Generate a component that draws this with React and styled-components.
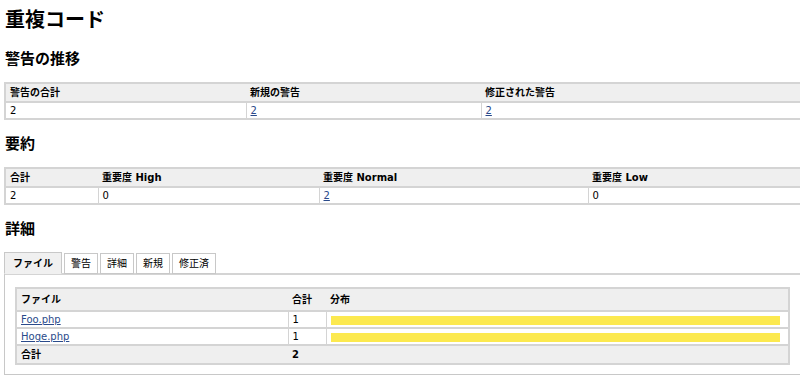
import React from "react";
import styled, { createGlobalStyle } from "styled-components";

const Global = createGlobalStyle`
  html, body { margin: 0; padding: 0; background: #fff; overflow: hidden; }
  body {
    font-family: "DejaVu Sans", Verdana, "Noto Sans CJK JP", sans-serif;
    font-size: 11px;
    color: #000;
  }
`;

const Page = styled.div`
  width: 830px;
  padding: 4px 0 0 4px;
  box-sizing: border-box;
`;

const Title = styled.h1`
  font-size: 20px;
  font-weight: bold;
  margin: 3px 0 0 1px;
  line-height: 26px;
`;

const Heading = styled.h2`
  font-size: 15px;
  font-weight: bold;
  margin: ${(p) => p.$top || 16}px 0 ${(p) => p.$bottom || 13}px 1px;
  line-height: 20px;
`;

const Table = styled.table`
  width: ${(p) => p.$width || "100%"};
  table-layout: fixed;
  border-collapse: collapse;
  border: 2px solid #d4d4d4;
  border-right: ${(p) => (p.$open ? "none" : "2px solid #d4d4d4")};
`;

const Th = styled.th`
  background: #efefef;
  text-align: left;
  font-weight: bold;
  font-size: 10px;
  line-height: 14px;
  padding: ${(p) => (p.$tall ? "4px 4px 3px" : "2px 4px 1px")};
  border-bottom: 2px solid #d4d4d4;
  width: ${(p) => p.$w || "auto"};
  box-sizing: border-box;
`;

const Td = styled.td`
  padding: 1px 4px 0;
  font-size: 10px;
  line-height: 14px;
  border-left: ${(p) => (p.$first || p.$foot ? "none" : "1px solid #d4d4d4")};
  border-bottom: ${(p) => (p.$last ? "none" : "2px solid #d4d4d4")};
  background: ${(p) => (p.$foot ? "#efefef" : "#fff")};
  font-weight: ${(p) => (p.$foot ? "bold" : "normal")};
  ${(p) => p.$foot && "padding: 2px 4px 1px;"}
`;

const Link = styled.a`
  color: #2a4a8a;
  text-decoration: underline;
`;

const Tabs = styled.div`
  display: flex;
  gap: 2px;
  position: relative;
  z-index: 1;
`;

const Tab = styled.div`
  padding: ${(p) => (p.$active ? "4px 8px 3px" : "3px 6px 2px")};
  margin-top: ${(p) => (p.$active ? "0" : "1px")};
  font-size: 10px;
  font-weight: ${(p) => (p.$active ? "bold" : "normal")};
  background: ${(p) => (p.$active ? "#f0f0f0" : "#fff")};
  border: 1px solid #c8c8c8;
  border-bottom: ${(p) => (p.$active ? "1px solid #f0f0f0" : "1px solid #c8c8c8")};
  margin-bottom: -1px;
  line-height: 13px;
`;

const Panel = styled.div`
  border: 1px solid #c8c8c8;
  border-top: 2px solid #d4d4d4;
  padding: 12px 10px 9px 10px;
  width: 830px;
  box-sizing: border-box;
`;

const Bar = styled.div`
  height: 9px;
  margin: 1px 0;
  background: #fce94f;
  width: ${(p) => p.$w}px;
`;

export default function App() {
  return (
    <>
      <Global />
      <Page>
        <Title>重複コード</Title>
        <Heading $top={16}>警告の推移</Heading>
        <Table $open>
          <thead>
            <tr>
              <Th $w="241px">警告の合計</Th>
              <Th $w="235px">新規の警告</Th>
              <Th>修正された警告</Th>
            </tr>
          </thead>
          <tbody>
            <tr>
              <Td $first $last>2</Td>
              <Td $last><Link href="#">2</Link></Td>
              <Td $last><Link href="#">2</Link></Td>
            </tr>
          </tbody>
        </Table>
        <Heading $top={14}>要約</Heading>
        <Table $open>
          <thead>
            <tr>
              <Th $w="93px">合計</Th>
              <Th $w="221px">重要度 High</Th>
              <Th $w="269px">重要度 Normal</Th>
              <Th>重要度 Low</Th>
            </tr>
          </thead>
          <tbody>
            <tr>
              <Td $first $last>2</Td>
              <Td $last>0</Td>
              <Td $last><Link href="#">2</Link></Td>
              <Td $last>0</Td>
            </tr>
          </tbody>
        </Table>
        <Heading $top={14}>詳細</Heading>
        <Tabs>
          <Tab $active>ファイル</Tab>
          <Tab>警告</Tab>
          <Tab>詳細</Tab>
          <Tab>新規</Tab>
          <Tab>修正済</Tab>
        </Tabs>
        <Panel>
          <Table $width="775px">
            <thead>
              <tr>
                <Th $tall $w="272px">ファイル</Th>
                <Th $tall $w="38px">合計</Th>
                <Th $tall>分布</Th>
              </tr>
            </thead>
            <tbody>
              <tr>
                <Td $first><Link href="#">Foo.php</Link></Td>
                <Td>1</Td>
                <Td><Bar $w={449} /></Td>
              </tr>
              <tr>
                <Td $first><Link href="#">Hoge.php</Link></Td>
                <Td>1</Td>
                <Td><Bar $w={449} /></Td>
              </tr>
              <tr>
                <Td $first $foot $last>合計</Td>
                <Td $foot $last>2</Td>
                <Td $foot $last></Td>
              </tr>
            </tbody>
          </Table>
        </Panel>
      </Page>
    </>
  );
}
